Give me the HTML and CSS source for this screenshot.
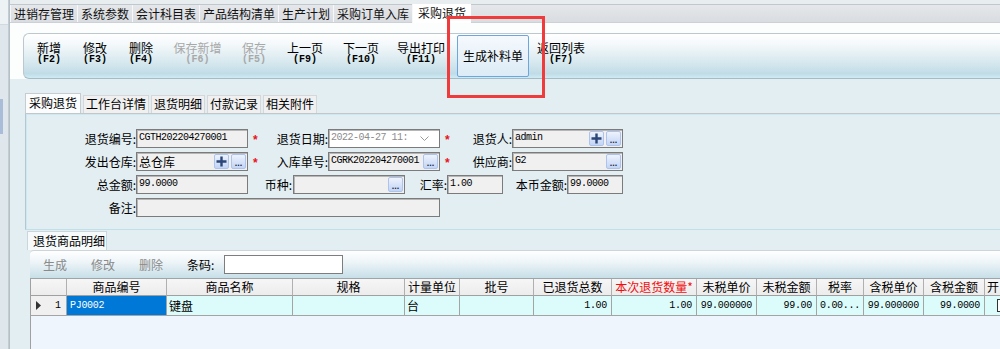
FILE: index.html
```html
<!DOCTYPE html>
<html lang="zh-CN">
<head>
    <meta charset="UTF-8">
    <meta name="viewport" content="width=device-width, initial-scale=1.0">
    <title>采购退货</title>
    <link rel="stylesheet" href="styles.css">
</head>
<body>
<div class="app">
    <aside class="side">
        <div class="side-top"></div>
        <div class="side-mark"></div>
    </aside>

    <div class="main">
        <div class="doc-head">
            <div class="doc-tabs">
                <span class="doc-tab">进销存管理</span>
                <span class="doc-tab">系统参数</span>
                <span class="doc-tab">会计科目表</span>
                <span class="doc-tab">产品结构清单</span>
                <span class="doc-tab">生产计划</span>
                <span class="doc-tab">采购订单入库</span>
                <span class="doc-tab active">采购退货</span>
            </div>
        </div>

        <div class="top-area">
            <div class="toolbar">
                <div class="tool">新增<span class="key">(F2)</span></div>
                <div class="tool">修改<span class="key">(F3)</span></div>
                <div class="tool">删除<span class="key">(F4)</span></div>
                <div class="tool tool-xl off">保存新增<span class="key">(F6)</span></div>
                <div class="tool off">保存<span class="key">(F5)</span></div>
                <div class="tool tool-md">上一页<span class="key">(F9)</span></div>
                <div class="tool tool-md">下一页<span class="key">(F10)</span></div>
                <div class="tool tool-lg">导出打印<span class="key">(F11)</span></div>
                <div class="tool-btn">生成补料单</div>
                <div class="tool tool-lg">返回列表<span class="key">(F7)</span></div>
            </div>
        </div>

        <div class="work">
            <div class="sub-tabs">
                <span class="sub-tab active">采购退货</span>
                <span class="sub-tab">工作台详情</span>
                <span class="sub-tab">退货明细</span>
                <span class="sub-tab">付款记录</span>
                <span class="sub-tab">相关附件</span>
            </div>

            <div class="form-panel">
                <div class="form-row">
                    <label class="lbl l110">退货编号:</label>
                    <div class="field f112"><span class="val">CGTH202204270001</span></div>
                    <span class="star">*</span>
                    <label class="lbl l60">退货日期:</label>
                    <div class="field f112 date">
                        <span class="val">2022-04-27 11:</span>
                        <svg class="chev" width="9" height="6" viewBox="0 0 9 6"><polyline points="0.5,0.5 4.5,4.5 8.5,0.5" fill="none" stroke="#9a9a9a" stroke-width="1"/></svg>
                    </div>
                    <span class="star">*</span>
                    <label class="lbl l52">退货人:</label>
                    <div class="field f111">
                        <span class="val">admin</span>
                        <span class="mini plus"><svg width="11" height="11" viewBox="0 0 11 11"><path d="M5.5 0.5v10M0.5 5.5h10" stroke="#2b4677" stroke-width="2.4"/></svg></span>
                        <span class="mini">...</span>
                    </div>
                </div>

                <div class="form-row">
                    <label class="lbl l110">发出仓库:</label>
                    <div class="field f112">
                        <span class="val cjk">总仓库</span>
                        <span class="mini plus"><svg width="11" height="11" viewBox="0 0 11 11"><path d="M5.5 0.5v10M0.5 5.5h10" stroke="#2b4677" stroke-width="2.4"/></svg></span>
                        <span class="mini">...</span>
                    </div>
                    <span class="star">*</span>
                    <label class="lbl l60">入库单号:</label>
                    <div class="field f112">
                        <span class="val">CGRK202204270001</span>
                        <span class="mini">...</span>
                    </div>
                    <span class="star">*</span>
                    <label class="lbl l52">供应商:</label>
                    <div class="field f111">
                        <span class="val">G2</span>
                        <span class="mini">...</span>
                    </div>
                </div>

                <div class="form-row">
                    <label class="lbl l110">总金额:</label>
                    <div class="field f112"><span class="val">99.0000</span></div>
                    <label class="lbl l45">币种:</label>
                    <div class="field f112">
                        <span class="val"></span>
                        <span class="mini">...</span>
                    </div>
                    <label class="lbl l42">汇率:</label>
                    <div class="field f56"><span class="val">1.00</span></div>
                    <label class="lbl l64">本币金额:</label>
                    <div class="field f56"><span class="val">99.0000</span></div>
                </div>

                <div class="form-row">
                    <label class="lbl l110">备注:</label>
                    <div class="field f304"><span class="val"></span></div>
                </div>
            </div>

            <div class="detail">
                <div class="detail-tabs">
                    <span class="detail-tab">退货商品明细</span>
                </div>
                <div class="grid-bar">
                    <span>生成</span>
                    <span>修改</span>
                    <span>删除</span>
                    <span class="barcode">条码:<input class="barcode-input" type="text"></span>
                </div>
                <div class="grid">
                    <div class="grid-head">
                        <div class="hc"></div>
                        <div class="hc">商品编号</div>
                        <div class="hc">商品名称</div>
                        <div class="hc">规格</div>
                        <div class="hc">计量单位</div>
                        <div class="hc">批号</div>
                        <div class="hc">已退货总数</div>
                        <div class="hc req">本次退货数量*</div>
                        <div class="hc">未税单价</div>
                        <div class="hc">未税金额</div>
                        <div class="hc">税率</div>
                        <div class="hc">含税单价</div>
                        <div class="hc">含税金额</div>
                        <div class="hc last">开</div>
                    </div>
                    <div class="grid-row">
                        <div class="rc head">
                            <svg width="5" height="9" viewBox="0 0 5 9"><path d="M0 0l5 4.5L0 9z" fill="#333"/></svg>
                            <span>1</span>
                        </div>
                        <div class="rc num-l sel">PJ0002</div>
                        <div class="rc">键盘</div>
                        <div class="rc"></div>
                        <div class="rc">台</div>
                        <div class="rc"></div>
                        <div class="rc num">1.00</div>
                        <div class="rc num">1.00</div>
                        <div class="rc num">99.000000</div>
                        <div class="rc num">99.00</div>
                        <div class="rc num-l">0.00...</div>
                        <div class="rc num">99.000000</div>
                        <div class="rc num">99.0000</div>
                        <div class="rc"><span class="check"></span></div>
                    </div>
                </div>
            </div>
        </div>
    </div>

    <div class="mark-box"></div>
</div>
</body>
</html>
```

FILE: styles.css
```css
* { margin: 0; padding: 0; box-sizing: border-box; }
html, body { width: 1000px; height: 349px; overflow: hidden; }
body {
    font-family: "Noto Sans CJK SC", "Noto Sans", sans-serif;
    font-size: 12px;
    line-height: 16px;
    color: #000;
    background: #e3eef3;
}
.app {
    position: relative;
    display: flex;
    height: 349px;
}

/* left strip */
.side {
    width: 9px;
    flex: none;
    background: #dfe7ec;
    border-right: 1px solid #c3ccd2;
}
.side-top {
    height: 25px;
    background: #edf2f4;
    border-bottom: 1px solid #d2dadf;
}
.side-mark {
    width: 3px;
    height: 35px;
    margin-top: 74px;
    background: #a9bcd8;
}
.main {
    flex: 1;
    min-width: 0;
    display: flex;
    flex-direction: column;
    border-left: 1px solid #b4c0c7;
}

/* document tabs */
.doc-head {
    padding-top: 4px;
    background: #e8eef0;
}
.doc-tabs {
    display: flex;
    height: 19px;
    background: linear-gradient(#e5e7ea, #d9dce0);
    border-top: 1px solid #bfc9cd;
    border-bottom: 1px solid #cdd1d6;
}
.doc-tab {
    padding: 0 3px;
    line-height: 17px;
    border-left: 1px solid #f6f7f8;
    color: #111;
    white-space: nowrap;
}
.doc-tab.active {
    padding: 0 5px;
    height: 19px;
    margin-top: -1px;
    background: #fff;
}

/* main toolbar */
.top-area {
    padding-top: 10px;
    background: #fcfdfd;
}
.toolbar {
    display: flex;
    height: 46px;
    margin-left: 13px;
    padding-left: 2px;
    border: 1px solid #bcc8ce;
    border-right: none;
    border-bottom-color: #a6bcc5;
    border-radius: 6px 0 0 6px;
    background: linear-gradient(#ffffff 0%, #f3f8fa 25%, #d6e8ee 65%, #c1dce6 90%, #cdebf6 100%);
}
.tool {
    width: 46px;
    flex: none;
    padding-top: 7px;
    text-align: center;
    line-height: 14px;
    white-space: nowrap;
}
.tool-md { width: 56px; }
.tool-lg { width: 64px; }
.tool-xl { width: 67px; }
.tool.off { color: #a8a8a8; }
.key {
    display: block;
    font: bold 10px/10px "Liberation Mono", monospace;
}
.tool-btn {
    width: 72px;
    height: 42px;
    flex: none;
    margin: 1px 0 0 4px;
    display: flex;
    align-items: center;
    justify-content: center;
    border: 1px solid #6ba6de;
    border-radius: 2px;
    background: linear-gradient(#f5f9fd, #dcebf6);
    white-space: nowrap;
}

/* work area */
.work {
    flex: 1;
    display: flex;
    flex-direction: column;
    padding: 14px 0 0 15px;
    background: #e3eef3;
}
.sub-tabs {
    display: flex;
    align-items: flex-end;
    gap: 2px;
    height: 20px;
}
.sub-tab {
    height: 18px;
    padding: 0 2px;
    line-height: 16px;
    background: #f0f0f0;
    border: 1px solid #d5d7d9;
    border-bottom: none;
    white-space: nowrap;
}
.sub-tab.active {
    height: 20px;
    padding: 0 3px;
    line-height: 18px;
    background: #fbfcfd;
    border-color: #c8ccd0;
}

/* form */
.form-panel {
    height: 117px;
    flex: none;
    display: flex;
    flex-direction: column;
    gap: 4px;
    padding-top: 15px;
    border-top: 1px solid #c3c7ca;
    border-left: 1px solid #b7c7ce;
    border-bottom: 1px solid #bfdfe9;
    box-shadow: inset 1px 1px 0 #cde8f0;
}
.form-row {
    display: flex;
    height: 19px;
}
.lbl {
    flex: none;
    text-align: right;
    line-height: 19px;
    white-space: nowrap;
}
.l110 { width: 110px; }
.l64 { width: 64px; }
.l60 { width: 60px; }
.l52 { width: 52px; }
.l45 { width: 45px; padding-right: 1px; }
.l42 { width: 42px; }
.star {
    width: 20px;
    flex: none;
    padding: 3px 0 0 5px;
    color: #e8141c;
    font: bold 12px/16px "Liberation Sans", sans-serif;
}
.field {
    flex: none;
    display: flex;
    align-items: flex-start;
    height: 19px;
    padding: 1px 1px 0 2px;
    border: 1px solid #7b7b7b;
    box-shadow: inset 1px 1px 0 #b6b6b6;
    background: #f0f0f0;
}
.f112 { width: 112px; }
.f111 { width: 111px; }
.f56 { width: 56px; }
.f304 { width: 304px; }
.val {
    flex: 1;
    min-width: 0;
    overflow: hidden;
    white-space: nowrap;
    font: 10px/14px "Liberation Mono", monospace;
    letter-spacing: -0.5px;
}
.val.cjk {
    overflow: visible;
    font: 12px/15px "Noto Sans CJK SC", sans-serif;
    letter-spacing: 0;
}
.field.date { background: #fff; }
.field.date .val { color: #8c8c8c; }
.chev { margin: 5px 9px 0 0; }
.mini {
    width: 15px;
    height: 15px;
    flex: none;
    margin-left: 2px;
    display: flex;
    align-items: flex-end;
    justify-content: center;
    border: 1px solid #adc3ec;
    border-radius: 2px;
    background: linear-gradient(#eef3fd, #c2d4f5);
    font: bold 9px/10px "Liberation Sans", sans-serif;
    color: #1d2b47;
}
.mini.plus { align-items: center; }

/* detail grid */
.detail {
    flex: 1;
    display: flex;
    flex-direction: column;
    min-height: 0;
    padding-left: 2px;
}
.detail-tabs {
    height: 20px;
    display: flex;
    align-items: flex-end;
}
.detail-tab {
    width: 80px;
    height: 19px;
    padding-left: 5px;
    line-height: 18px;
    background: #f6fafb;
    border: 1px solid #c9d6db;
    border-bottom: none;
}
.grid-bar {
    height: 28px;
    flex: none;
    display: flex;
    align-items: center;
    gap: 24px;
    margin-left: 3px;
    padding-left: 13px;
    border-top: 1px solid #cdd5d9;
    border-radius: 4px 0 0 0;
    background: linear-gradient(#ffffff, #eef5f8 40%, #c7dfe8);
    color: #8a8a8a;
}
.barcode {
    display: flex;
    align-items: center;
    gap: 10px;
    color: #000;
}
.barcode-input {
    width: 119px;
    height: 19px;
    border: 1px solid #7d7d7d;
    background: #fff;
    outline: none;
}
.grid {
    flex: 1;
    margin-left: 3px;
    overflow: hidden;
    border-top: 1px solid #9ea4a8;
    border-left: 1px solid #a0a0a0;
    background: #eef5fc;
}
.grid-head,
.grid-row {
    display: grid;
    grid-template-columns: 36px 100px 126px 112px 55px 74px 78px 85px 60px 60px 47px 60px 61px 40px;
    width: max-content;
}
.hc {
    height: 17px;
    line-height: 16px;
    text-align: center;
    white-space: nowrap;
    background: linear-gradient(#f6f6f6, #ececec);
    border-right: 1px solid #b0b0b0;
    border-bottom: 1px solid #a0a0a0;
}
.hc.req { color: #f20d0d; }
.hc.last { text-align: left; padding-left: 2px; }
.rc {
    height: 20px;
    padding: 0 2px;
    line-height: 19px;
    white-space: nowrap;
    overflow: hidden;
    background: #dcfcfc;
    border-right: 1px solid #a4a4a4;
    border-bottom: 1px solid #a4a4a4;
}
.rc.head {
    display: flex;
    align-items: center;
    justify-content: space-between;
    padding: 0 5px 0 5px;
    background: #f0f0f0;
    font: 10px/19px "Liberation Mono", monospace;
}
.num,
.num-l {
    font: 10px/19px "Liberation Mono", monospace;
    letter-spacing: -0.3px;
}
.num { text-align: right; padding-right: 4px; }
.num-l { padding-left: 3px; }
.rc.sel {
    background: #0078d7;
    color: #fff;
}
.check {
    display: inline-block;
    width: 13px;
    height: 13px;
    margin: 3px 0 0 10px;
    border: 1px solid #333;
    background: #fff;
}

/* screenshot annotation */
.mark-box {
    position: absolute;
    left: 447px;
    top: 16px;
    width: 98px;
    height: 82px;
    border: 3px solid #ef3b3b;
}
```
